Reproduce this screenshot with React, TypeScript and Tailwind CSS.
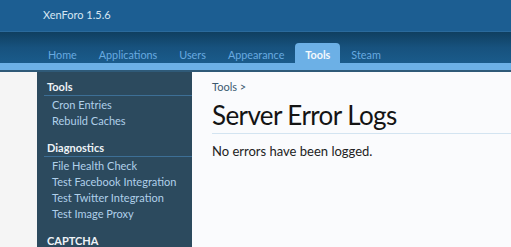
const tabs = ["Home", "Applications", "Users", "Appearance", "Tools", "Steam"];

const groups = [
  { title: "Tools", links: ["Cron Entries", "Rebuild Caches"] },
  {
    title: "Diagnostics",
    links: [
      "File Health Check",
      "Test Facebook Integration",
      "Test Twitter Integration",
      "Test Image Proxy",
    ],
  },
  { title: "CAPTCHA", links: [] as string[] },
];

export default function App() {
  return (
    <div className="h-[247px] w-[511px] overflow-hidden bg-[#f5f5f5] font-['Lato',sans-serif]">
      {/* header */}
      <div className="flex h-[31px] items-center bg-[#1c5e92] pl-[43px] text-[11px] text-[#d6e6f3]">
        XenForo 1.5.6
      </div>
      <div className="h-px bg-[#2a6a9c]" />
      <div className="flex h-[31px] items-end bg-gradient-to-b from-[#0f3f60] via-[#17527e] to-[#1a5b8b] pl-[37px]">
        {tabs.map((t) =>
          t === "Tools" ? (
            <div
              key={t}
              className="h-[20px] rounded-t-[4px] bg-[#6cb0e6] px-[10px] pt-[5px] text-[10.8px] leading-[14px] font-bold text-[#f4f9fd]"
            >
              {t}
            </div>
          ) : (
            <div key={t} className="h-[20px] px-[11px] pt-[5px] text-[10.8px] leading-[14px] text-[#68aae0]">
              {t}
            </div>
          )
        )}
      </div>
      <div className="h-[7px] bg-[#6cb0e6]" />
      <div className="h-[2px] bg-[#2f5a78]" />

      {/* body */}
      <div className="flex pl-[37px]">
        <div className="h-[200px] w-[155px] bg-[#2c4a5e] pl-[7px] pt-[7px]">
          {groups.map((g) => (
            <div key={g.title} className="mb-[11px]">
              <div className="h-[17px] border-b border-[#3d6f96] pl-[3px] text-[11px] font-bold leading-[16px] text-[#eef3f7]">
                {g.title}
              </div>
              <div className="pt-[1px]">
                {g.links.map((l) => (
                  <div key={l} className="pl-[8px] text-[11px] leading-[16px] text-[#b0d0ea]">
                    {l}
                  </div>
                ))}
              </div>
            </div>
          ))}
        </div>
        <div className="h-[200px] flex-1 bg-[#fafbfd] pl-[20px] pt-[8px]">
          <div className="text-[11px] leading-[14px] text-[#3b5970]">Tools &gt;</div>
          <h1 className="mt-[5px] border-b border-[#d3e4f1] pb-[2px] text-[26px] leading-[32px] tracking-[-0.6px] text-[#141414]">
            Server Error Logs
          </h1>
          <p className="mt-[9px] text-[13px] leading-[16px] text-[#222]">No errors have been logged.</p>
        </div>
      </div>
    </div>
  );
}
